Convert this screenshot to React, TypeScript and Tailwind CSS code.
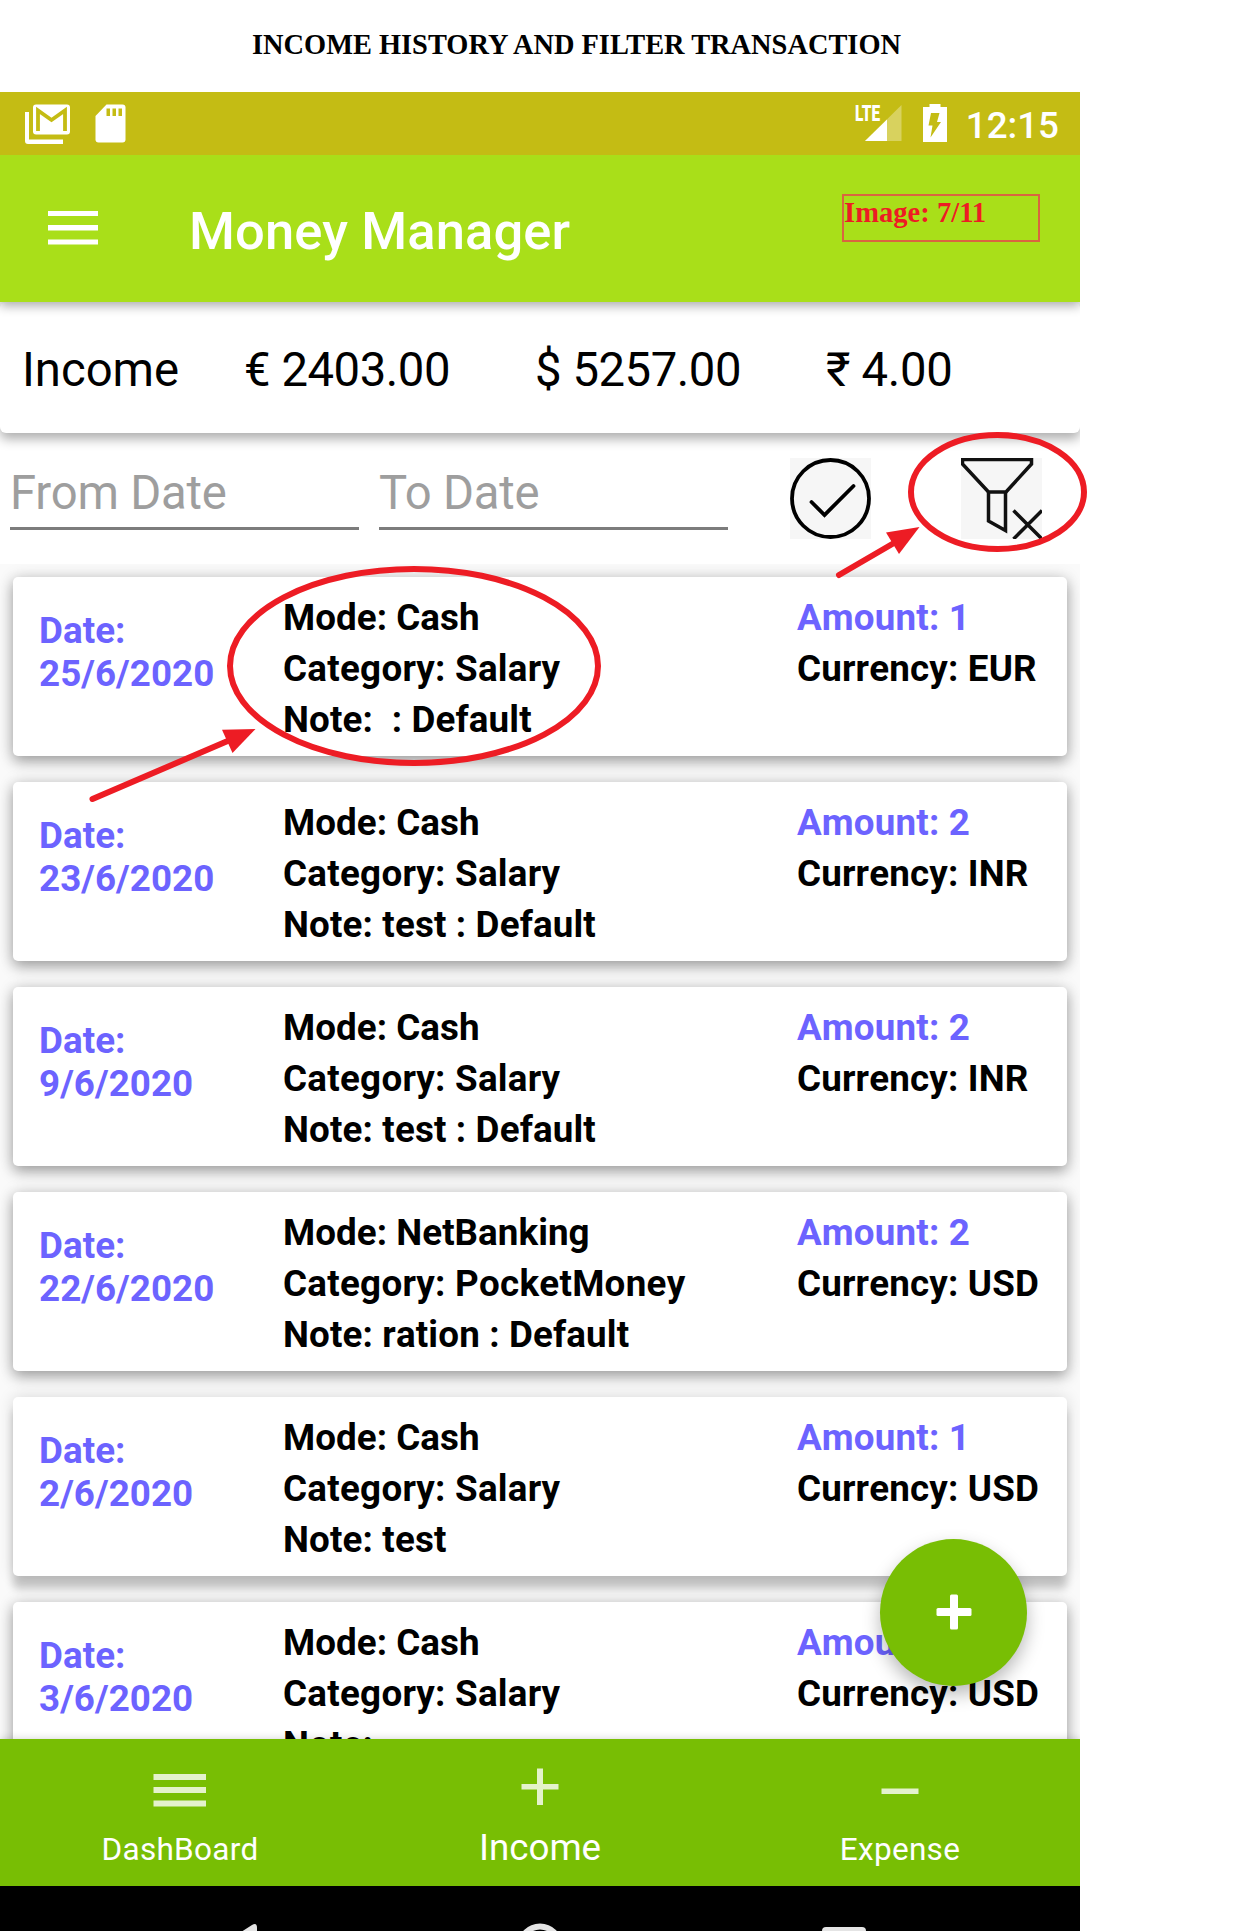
import type { ReactNode } from "react";

type Entry = { date: string; mode: string; category: string; note: string; amount: number; currency: string; raised?: boolean };

const entries: Entry[] = [
  { date: "25/6/2020", mode: "Cash", category: "Salary", note: "  : Default", amount: 1, currency: "EUR" },
  { date: "23/6/2020", mode: "Cash", category: "Salary", note: " test : Default", amount: 2, currency: "INR" },
  { date: "9/6/2020", mode: "Cash", category: "Salary", note: " test : Default", amount: 2, currency: "INR" },
  { date: "22/6/2020", mode: "NetBanking", category: "PocketMoney", note: " ration : Default", amount: 2, currency: "USD" },
  { date: "2/6/2020", mode: "Cash", category: "Salary", note: " test", amount: 1, currency: "USD", raised: true },
  { date: "3/6/2020", mode: "Cash", category: "Salary", note: "", amount: 1, currency: "USD" },
];

function StatusBar() {
  return (
    <div className="flex h-[63px] items-start bg-[#c4bc14] text-white">
      <svg className="ml-[24px] mt-[11px] h-[42px] w-[48px]" viewBox="24 103 48 42" fill="none">
        <path d="M25 112h4v27.500h34v4.500H28q-3 0-3-3z" fill="#fff" />
        <path d="M36 104.500h31q3 0 3 3v24q0 3-3 3H36q-3 0-3-3V107.500q0-3 3-3z" fill="#fff" />
        <path d="M38 131V110.500l13.500 9.500L65 110.500v20.500" stroke="#c4bc14" strokeWidth="3.800" />
      </svg>
      <svg className="ml-[22px] mt-[11px] h-[42px] w-[34px]" viewBox="94 103 34 42">
        <path d="M106.500 104.500h16q3 0 3 3v32q0 3-3 3h-24q-3 0-3-3V116z" fill="#fff" />
        <path d="M106.500 108.500h3.500v7.500h-3.500zM112.500 108.500h3.500v7.500h-3.500zM118.500 108.500h3.500v7.500h-3.500z" fill="#c4bc14" />
      </svg>
      <div className="relative ml-auto mt-[11px] h-[42px] w-[48px]">
        <svg className="h-[42px] w-[48px]" viewBox="854 103 48 42">
          <path d="M864 141L900.500 105v36z" fill="#d8d25e" />
          <path d="M864 141L886 119.500V141z" fill="#fff" />
        </svg>
        <span className="absolute left-0 top-0 origin-left scale-x-[0.7] text-[22px] font-black leading-[22px]">LTE</span>
      </div>
      <svg className="ml-[18px] mt-[11px] h-[42px] w-[28px]" viewBox="920 103 28 42">
        <path d="M928.500 104h11v3h6.500v35h-24V107h6.500z" fill="#fff" />
        <path d="M930 113h8.500l-2.500 9h4l-10.500 15.500 2-12h-4z" fill="#c4bc14" />
      </svg>
      <span className="ml-[17px] mr-[21px] mt-[12px] text-[36.75px] font-medium leading-[43px]">12:15</span>
    </div>
  );
}

function Header() {
  return (
    <header className="relative z-10 flex h-[147px] items-start bg-[#a9df19] shadow-[0_4px_10px_rgba(0,0,0,0.32)] [clip-path:inset(0_0_-20px_0)]">
      <svg className="ml-[48px] mt-[55px] h-[36px] w-[50px]" viewBox="0 0 50 36">
        <path d="M0 1h50v5H0zM0 15h50v5.500H0zM0 29.500h50v5H0z" fill="#fff" />
      </svg>
      <h1 className="ml-[91px] mt-[45px] w-[562px] text-[52.5px] font-medium leading-[62px] tracking-[0.12px] text-white">Money Manager</h1>
      <div className="ml-[91px] mt-[39px] h-[48px] w-[198px] border-2 border-[#d96540] font-['Liberation_Serif'] text-[28.6px] font-bold leading-[34px] text-[#ed1c24]">
        Image: 7/11
      </div>
    </header>
  );
}

function Summary() {
  return (
    <section className="relative flex h-[131px] items-start rounded-[6px] bg-white pt-[41px] text-[47.25px] leading-[55px] shadow-[0_6px_12px_rgba(0,0,0,0.32)]">
      <span className="ml-[22px] w-[222px]">Income</span>
      <span className="w-[291px] tracking-[-0.45px]">€ 2403.00</span>
      <span className="w-[291px] tracking-[-0.45px]">$ 5257.00</span>
      <span className="tracking-[-0.3px]">₹ 4.00</span>
    </section>
  );
}

function Filters() {
  return (
    <section className="flex h-[131px] items-start text-[47.25px] leading-[57px] tracking-[-0.2px] text-[#9e9e9e]">
      <div className="ml-[10px] mt-[32px] h-[65px] w-[349px] border-b-[3px] border-[#7c7c7c]">From Date</div>
      <div className="ml-[20px] mt-[32px] h-[65px] w-[349px] border-b-[3px] border-[#7c7c7c]">To Date</div>
      <svg className="ml-[62px] mt-[25px] h-[81px] w-[81px] bg-[#f6f6f6]" viewBox="0 0 81 81" fill="none" stroke="#000">
        <circle cx="40.500" cy="40.500" r="38.500" strokeWidth="3.800" />
        <path d="M21.500 44L34.500 57L63.500 28" strokeWidth="3.800" strokeLinecap="round" />
      </svg>
      <svg className="ml-[90px] mt-[25px] h-[81px] w-[81px] bg-[#f6f6f6]" viewBox="0 0 81 81" fill="none" stroke="#111" strokeWidth="3.500">
        <path d="M1.500 1.500H70.500V6L45 34H27.500L1.500 6z" />
        <path d="M27.500 34V63L44.500 72.500V34" />
        <path d="M52.500 52.500L81 81M81 52.500L52.500 81" />
      </svg>
    </section>
  );
}

function EntryCard({ entry }: { entry: Entry }) {
  const shadow = entry.raised
    ? "shadow-[0_13px_8px_rgba(0,0,0,0.2),0_0_16px_rgba(0,0,0,0.14)]"
    : "shadow-[0_6px_14px_rgba(0,0,0,0.3),0_0_16px_rgba(0,0,0,0.14)]";
  return (
    <article className={`flex h-[179px] shrink-0 rounded-[5px] bg-white pt-[15px] text-[36.75px] font-bold leading-[51px] tracking-[0.05px] [font-kerning:none] ${shadow}`}>
      <div className="ml-[26px] mt-[17px] w-[244px] leading-[43px] text-[#6c63ff]">
        <p>Date:</p>
        <p>{entry.date}</p>
      </div>
      <div className="w-[514px] whitespace-pre">
        <p>Mode: {entry.mode}</p>
        <p className="tracking-[0.28px]">Category: {entry.category}</p>
        <p className="tracking-[0.15px]">Note:{entry.note}</p>
      </div>
      <div className="whitespace-nowrap tracking-[0.17px]">
        <p className="text-[#6c63ff]">Amount: {entry.amount}</p>
        <p>Currency: {entry.currency}</p>
      </div>
    </article>
  );
}

function NavItem({ label, active, children }: { label: string; active?: boolean; children: ReactNode }) {
  return (
    <div className="flex w-[360px] flex-col items-center pt-[26px] text-white">
      <svg className="h-[44px] w-[60px]" viewBox="0 0 60 44" fill="#e4f2cc">{children}</svg>
      {active ? (
        <span className="mt-[17px] text-[36.75px] leading-[43px]">{label}</span>
      ) : (
        <span className="mt-[17px] text-[31.5px] leading-[47px] tracking-[0.3px]">{label}</span>
      )}
    </div>
  );
}

function Annotations() {
  return (
    <svg className="pointer-events-none absolute left-0 top-0 z-30 h-[1931px] w-[1246px]" viewBox="0 0 1246 1931" fill="none" stroke="#ed1c24" strokeWidth="6" strokeLinecap="round">
      <ellipse cx="414" cy="666" rx="184" ry="97" />
      <path d="M92.500 799L230 740" />
      <path d="M255.500 729L222 729.700L232.500 753z" fill="#ed1c24" stroke="none" />
      <ellipse cx="997.500" cy="492" rx="86.500" ry="57" />
      <path d="M839 575L894 543" />
      <path d="M919.500 527L886 532.500L899 554z" fill="#ed1c24" stroke="none" />
    </svg>
  );
}

export default function App() {
  return (
    <main className="relative h-[1931px] w-[1246px] overflow-hidden bg-white font-[Roboto,sans-serif] text-black">
      <div className="h-[92px] pl-[252px] pt-[28px] font-['Liberation_Serif'] text-[28.4px] font-bold leading-[33px]">
        INCOME HISTORY AND FILTER TRANSACTION
      </div>
      <div className="relative h-[1839px] w-[1080px] overflow-hidden">
        <StatusBar />
        <Header />
        <Summary />
        <Filters />
        <section className="flex h-[1175px] flex-col gap-[26px] overflow-hidden bg-[#fafafa] px-[13px] pt-[13px]">
          {entries.map((entry) => (
            <EntryCard key={entry.date} entry={entry} />
          ))}
        </section>
        <nav className="relative flex h-[147px] bg-[#78be04] shadow-[0_0_8px_rgba(0,0,0,0.18)]">
          <NavItem label="DashBoard">
            <path d="M3.500 9h52.500v6H3.500zM3.500 22h52.500v6H3.500zM3.500 35.500h52.500v6H3.500z" />
          </NavItem>
          <NavItem label="Income" active>
            <path d="M11.500 19H27V3.500h6V19h15.500v5.500H33V40h-6V24.500H11.500z" />
          </NavItem>
          <NavItem label="Expense">
            <path d="M11.500 23.500h37v5.500h-37z" />
          </NavItem>
        </nav>
        <div className="flex h-[45px] bg-black">
          <svg className="h-[45px] w-[1080px]" viewBox="0 0 1080 45">
            <path d="M238 48L252 39Q257 36 257 42V48z" fill="#e4e4e4" />
            <circle cx="540" cy="60" r="19.500" fill="none" stroke="#e4e4e4" strokeWidth="6" />
            <rect x="822" y="41" width="44" height="40" rx="4" fill="#e4e4e4" />
          </svg>
        </div>
        <button className="absolute left-[880px] top-[1447px] z-20 flex h-[147px] w-[147px] items-center justify-center rounded-full bg-[#78be04] pb-[1px] shadow-[0_8px_18px_rgba(0,0,0,0.28)]" aria-label="Add income">
          <svg className="h-[36px] w-[36px]" viewBox="0 0 36 36" fill="#fff">
            <rect x="0.500" y="14" width="35" height="8" rx="1.500" />
            <rect x="14" y="0.500" width="8" height="35" rx="1.500" />
          </svg>
        </button>
      </div>
      <Annotations />
    </main>
  );
}
